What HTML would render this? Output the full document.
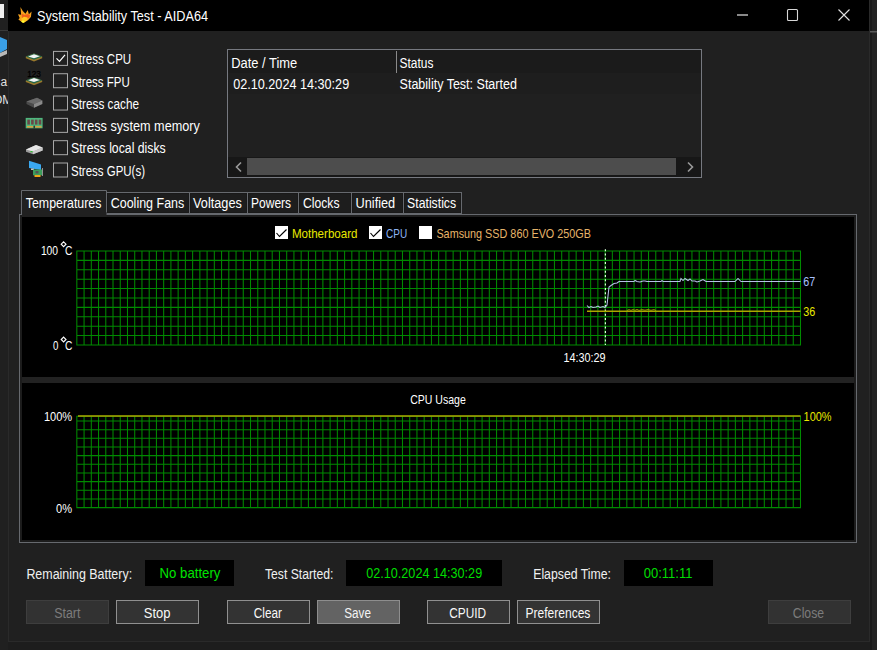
<!DOCTYPE html>
<html><head><meta charset="utf-8"><style>
html,body{margin:0;padding:0;background:#1c1c1c;width:877px;height:650px;overflow:hidden}
svg{display:block;font-family:"Liberation Sans", sans-serif}
</style></head><body>
<svg width="877" height="650" viewBox="0 0 877 650">
<rect x="0" y="0" width="877" height="650" fill="#1d1d1d" />
<rect x="872" y="0" width="5" height="650" fill="#232323" />
<rect x="870" y="0" width="2" height="650" fill="#1a1a1a" />
<rect x="869" y="31" width="8" height="1.5" fill="#5a5a5a" />
<rect x="0" y="0" width="8" height="650" fill="#202020" />
<rect x="0" y="4" width="4" height="14" fill="#f0f0f0"/>
<rect x="0" y="30" width="8" height="1" fill="#3a3a3a"/>
<path d="M0 37 L7 40 L7 49 L0 53 Z" fill="#3aa0e8"/>
<path d="M0 53 L7 50 L7 54 L0 57 Z" fill="#b8b8b8"/>
<text x="-9.5" y="86" font-size="12" fill="#e0e0e0">Ma</text>
<text x="-7" y="104" font-size="12" fill="#e0e0e0">OM</text>
<rect x="8" y="0" width="862" height="642" fill="#2a2a2a" />
<rect x="9" y="31" width="860" height="610" fill="#202020" />
<rect x="8" y="0" width="861" height="31" fill="#000000" />
<text x="37.00" y="20.50" font-size="13.8" fill="#ffffff" textLength="171.00" lengthAdjust="spacingAndGlyphs" >System Stability Test - AIDA64</text>
<line x1="737" y1="15" x2="748" y2="15" stroke="#c4c4c4" stroke-width="1.4"/>
<rect x="787.5" y="9.5" width="10" height="11" rx="1" fill="none" stroke="#d8d8d8" stroke-width="1.1"/>
<path d="M838.5 9.5 L849.5 20.5 M849.5 9.5 L838.5 20.5" stroke="#e0e0e0" stroke-width="1.1"/>
<path d="M20.4 6.9 L22.8 11.1 L25.5 13.8 L27.7 10.1 L28.9 14.2 L31.6 11.6 L30.9 16.9 L27.9 20.2 L23.5 23 L21.8 21.9 L18.4 19.6 L19.7 17.9 L18 14.2 L21.1 14.8 L20.8 10.8 Z" fill="#f5a21e"/>
<path d="M21.5 13.5 L24.5 15 L27.5 14 L30 15 L29.5 17.5 L26 19 L22 18 Z" fill="#f0601a"/>
<path d="M21.3 18.5 L24 16.8 L27.5 17.5 L27.5 19.8 L24 22.5 L22 21.8 Z" fill="#ffc820"/>
<ellipse cx="23" cy="21.6" rx="1.6" ry="1.1" fill="#ffff30"/>
<rect x="53.5" y="51.400000000000006" width="14" height="14" fill="#202020" stroke="#a8a8a8" stroke-width="1"/>
<path d="M56.5 58.400000000000006 L59.5 61.400000000000006 L65 54.900000000000006" fill="none" stroke="#ffffff" stroke-width="1.2"/>
<text x="71.00" y="64.20" font-size="13.8" fill="#ffffff" textLength="60.20" lengthAdjust="spacingAndGlyphs" >Stress CPU</text>
<rect x="53.5" y="73.72000000000001" width="14" height="14" fill="#202020" stroke="#a8a8a8" stroke-width="1"/>
<text x="71.00" y="86.52" font-size="13.8" fill="#ffffff" textLength="58.80" lengthAdjust="spacingAndGlyphs" >Stress FPU</text>
<rect x="53.5" y="96.04" width="14" height="14" fill="#202020" stroke="#a8a8a8" stroke-width="1"/>
<text x="71.00" y="108.84" font-size="13.8" fill="#ffffff" textLength="68.00" lengthAdjust="spacingAndGlyphs" >Stress cache</text>
<rect x="53.5" y="118.36000000000003" width="14" height="14" fill="#202020" stroke="#a8a8a8" stroke-width="1"/>
<text x="71.00" y="131.16" font-size="13.8" fill="#ffffff" textLength="128.90" lengthAdjust="spacingAndGlyphs" >Stress system memory</text>
<rect x="53.5" y="140.68" width="14" height="14" fill="#202020" stroke="#a8a8a8" stroke-width="1"/>
<text x="71.00" y="153.48" font-size="13.8" fill="#ffffff" textLength="94.70" lengthAdjust="spacingAndGlyphs" >Stress local disks</text>
<rect x="53.5" y="163.0" width="14" height="14" fill="#202020" stroke="#a8a8a8" stroke-width="1"/>
<text x="71.00" y="175.80" font-size="13.8" fill="#ffffff" textLength="74.00" lengthAdjust="spacingAndGlyphs" >Stress GPU(s)</text>
<path d="M25.8 56.6 L34 53.4 L42.2 56.6 L42.2 58.199999999999996 L34 61.4 L25.8 58.199999999999996 Z" fill="#98782c"/>
<path d="M25.8 56.5 L34 53.4 L42.2 56.5 L34 59.8 Z" fill="#236848"/>
<path d="M28.1 56.449999999999996 L34 54.15 L39.9 56.3 L34 58.3 Z" fill="#f4f4f4"/>
<path d="M25.8 80.4 L34 77.2 L42.2 80.4 L42.2 82.0 L34 85.2 L25.8 82.0 Z" fill="#98782c"/>
<path d="M25.8 80.3 L34 77.2 L42.2 80.3 L34 83.60000000000001 Z" fill="#236848"/>
<path d="M28.1 80.25 L34 77.95 L39.9 80.10000000000001 L34 82.10000000000001 Z" fill="#f4f4f4"/>
<text x="27.2" y="76.8" font-size="8.4" fill="#000000" stroke="#000" stroke-width="0.3" textLength="13.6" lengthAdjust="spacingAndGlyphs">123</text>
<path d="M26.5 101.5 L37 97.8 L42.3 100.5 L42.3 104 L34 107.7 L26.5 104 Z" fill="#4a4a4a"/>
<path d="M26.5 101.5 L37 97.8 L42.3 100.5 L34 104 Z" fill="#6a6a6a"/>
<path d="M34 104 L42.3 100.5 L42.3 104 L34 107.7 Z" fill="#8a8a8a"/>
<rect x="25.7" y="117.9" width="16.9" height="10.4" fill="#4fb87e"/>
<rect x="27.3" y="119.6" width="2.6" height="5" fill="#6a4848"/>
<rect x="31.1" y="119.6" width="2.6" height="5" fill="#6a4848"/>
<rect x="34.9" y="119.6" width="2.6" height="5" fill="#6a4848"/>
<rect x="38.7" y="119.6" width="2.6" height="5" fill="#6a4848"/>
<rect x="27" y="126" width="6.3" height="1.6" fill="#d8a040"/>
<rect x="35.2" y="126" width="6.3" height="1.6" fill="#d8a040"/>
<rect x="33.6" y="125.6" width="1.2" height="2.7" fill="#202020"/>
<path d="M26 149.5 L36 145 L42.6 147.5 L42.6 150.5 L33 154.2 L26 151.8 Z" fill="#9a9a9a"/>
<path d="M26 149.5 L36 145 L42.6 147.5 L33 151.6 Z" fill="#e6e6e6"/>
<path d="M33 151.6 L42.6 147.5 L42.6 150.5 L33 154.2 Z" fill="#c8c8c8"/>
<rect x="30.5" y="151" width="2" height="1.2" fill="#30c030"/>
<path d="M29 160.7 L41 164.5 L41 170 L29 168 Z" fill="#3aa8f0"/>
<rect x="31" y="168.5" width="3" height="1.5" fill="#c8c8c8"/>
<rect x="33" y="169.5" width="9" height="5.8" fill="#3d9e5c"/>
<rect x="35.5" y="171" width="3" height="2.5" fill="#555"/>
<rect x="34.5" y="175" width="6" height="2" fill="#f0a818"/>
<rect x="42" y="168" width="0.8" height="8" fill="#b0b0b0"/>
<rect x="227" y="49" width="475" height="129" fill="#767980" />
<rect x="228" y="50" width="473" height="127" fill="#202020" />
<rect x="228" y="50" width="473" height="23" fill="#1b1b1b" />
<rect x="228" y="73" width="473" height="21" fill="#1e1e1e" />
<rect x="396" y="51" width="1" height="22" fill="#8a8a8a"/>
<text x="231.20" y="67.60" font-size="13.8" fill="#fff" textLength="66.00" lengthAdjust="spacingAndGlyphs" >Date / Time</text>
<text x="399.60" y="68.00" font-size="13.8" fill="#fff" textLength="33.80" lengthAdjust="spacingAndGlyphs" >Status</text>
<text x="233.20" y="89.00" font-size="13.8" fill="#fff" textLength="116.00" lengthAdjust="spacingAndGlyphs" >02.10.2024 14:30:29</text>
<text x="399.60" y="88.70" font-size="13.8" fill="#fff" textLength="117.30" lengthAdjust="spacingAndGlyphs" >Stability Test: Started</text>
<rect x="228" y="157" width="473" height="20" fill="#171717" />
<rect x="247" y="158" width="429" height="17" fill="#4d4d4d" />
<path d="M241 162.5 L236.5 167 L241 171.5" fill="none" stroke="#9a9a9a" stroke-width="1.6"/>
<path d="M688 162.5 L692.5 167 L688 171.5" fill="none" stroke="#9a9a9a" stroke-width="1.6"/>
<rect x="19" y="214" width="838" height="329" fill="#66696e" />
<rect x="20" y="215" width="836" height="327" fill="#1c1c1c" />
<rect x="22" y="217" width="832" height="323" fill="#000000" />
<rect x="22" y="377" width="832" height="6" fill="#222222" />
<rect x="106.5" y="192.5" width="83" height="21" fill="#1b1b1b" stroke="#66696e" stroke-width="1"/>
<rect x="107.5" y="193.5" width="81" height="19" fill="#1d1d1d" stroke="#191919" stroke-width="1"/>
<text x="110.70" y="208.10" font-size="13.8" fill="#fff" textLength="73.60" lengthAdjust="spacingAndGlyphs" >Cooling Fans</text>
<rect x="189.5" y="192.5" width="58" height="21" fill="#1b1b1b" stroke="#66696e" stroke-width="1"/>
<rect x="190.5" y="193.5" width="56" height="19" fill="#1d1d1d" stroke="#191919" stroke-width="1"/>
<text x="193.10" y="208.10" font-size="13.8" fill="#fff" textLength="48.70" lengthAdjust="spacingAndGlyphs" >Voltages</text>
<rect x="247.5" y="192.5" width="51" height="21" fill="#1b1b1b" stroke="#66696e" stroke-width="1"/>
<rect x="248.5" y="193.5" width="49" height="19" fill="#1d1d1d" stroke="#191919" stroke-width="1"/>
<text x="251.00" y="208.10" font-size="13.8" fill="#fff" textLength="40.10" lengthAdjust="spacingAndGlyphs" >Powers</text>
<rect x="298.5" y="192.5" width="53" height="21" fill="#1b1b1b" stroke="#66696e" stroke-width="1"/>
<rect x="299.5" y="193.5" width="51" height="19" fill="#1d1d1d" stroke="#191919" stroke-width="1"/>
<text x="303.00" y="208.10" font-size="13.8" fill="#fff" textLength="36.50" lengthAdjust="spacingAndGlyphs" >Clocks</text>
<rect x="351.5" y="192.5" width="52" height="21" fill="#1b1b1b" stroke="#66696e" stroke-width="1"/>
<rect x="352.5" y="193.5" width="50" height="19" fill="#1d1d1d" stroke="#191919" stroke-width="1"/>
<text x="355.50" y="208.10" font-size="13.8" fill="#fff" textLength="39.70" lengthAdjust="spacingAndGlyphs" >Unified</text>
<rect x="403.5" y="192.5" width="58" height="21" fill="#1b1b1b" stroke="#66696e" stroke-width="1"/>
<rect x="404.5" y="193.5" width="56" height="19" fill="#1d1d1d" stroke="#191919" stroke-width="1"/>
<text x="407.10" y="208.10" font-size="13.8" fill="#fff" textLength="49.00" lengthAdjust="spacingAndGlyphs" >Statistics</text>
<path d="M21.5 214 L21.5 190.5 L106.5 190.5 L106.5 214" fill="#202020" stroke="#66696e" stroke-width="1"/>
<rect x="22" y="212" width="84.5" height="5" fill="#202020" />
<rect x="20" y="214" width="1" height="1" fill="#66696e" />
<text x="25.80" y="208.00" font-size="13.8" fill="#fff" textLength="75.60" lengthAdjust="spacingAndGlyphs" >Temperatures</text>
<path d="M76.83 251.00V344.95 M84.07 251.00V344.95 M91.30 251.00V344.95 M98.54 251.00V344.95 M105.78 251.00V344.95 M113.01 251.00V344.95 M120.25 251.00V344.95 M127.49 251.00V344.95 M134.72 251.00V344.95 M141.96 251.00V344.95 M149.20 251.00V344.95 M156.43 251.00V344.95 M163.67 251.00V344.95 M170.91 251.00V344.95 M178.14 251.00V344.95 M185.38 251.00V344.95 M192.62 251.00V344.95 M199.85 251.00V344.95 M207.09 251.00V344.95 M214.33 251.00V344.95 M221.56 251.00V344.95 M228.80 251.00V344.95 M236.04 251.00V344.95 M243.27 251.00V344.95 M250.51 251.00V344.95 M257.75 251.00V344.95 M264.98 251.00V344.95 M272.22 251.00V344.95 M279.46 251.00V344.95 M286.69 251.00V344.95 M293.93 251.00V344.95 M301.17 251.00V344.95 M308.40 251.00V344.95 M315.64 251.00V344.95 M322.88 251.00V344.95 M330.11 251.00V344.95 M337.35 251.00V344.95 M344.59 251.00V344.95 M351.82 251.00V344.95 M359.06 251.00V344.95 M366.30 251.00V344.95 M373.53 251.00V344.95 M380.77 251.00V344.95 M388.01 251.00V344.95 M395.24 251.00V344.95 M402.48 251.00V344.95 M409.72 251.00V344.95 M416.95 251.00V344.95 M424.19 251.00V344.95 M431.43 251.00V344.95 M438.66 251.00V344.95 M445.90 251.00V344.95 M453.14 251.00V344.95 M460.38 251.00V344.95 M467.61 251.00V344.95 M474.85 251.00V344.95 M482.09 251.00V344.95 M489.32 251.00V344.95 M496.56 251.00V344.95 M503.80 251.00V344.95 M511.03 251.00V344.95 M518.27 251.00V344.95 M525.51 251.00V344.95 M532.74 251.00V344.95 M539.98 251.00V344.95 M547.22 251.00V344.95 M554.45 251.00V344.95 M561.69 251.00V344.95 M568.93 251.00V344.95 M576.16 251.00V344.95 M583.40 251.00V344.95 M590.64 251.00V344.95 M597.87 251.00V344.95 M605.11 251.00V344.95 M612.35 251.00V344.95 M619.58 251.00V344.95 M626.82 251.00V344.95 M634.06 251.00V344.95 M641.29 251.00V344.95 M648.53 251.00V344.95 M655.77 251.00V344.95 M663.00 251.00V344.95 M670.24 251.00V344.95 M677.48 251.00V344.95 M684.71 251.00V344.95 M691.95 251.00V344.95 M699.19 251.00V344.95 M706.42 251.00V344.95 M713.66 251.00V344.95 M720.90 251.00V344.95 M728.13 251.00V344.95 M735.37 251.00V344.95 M742.61 251.00V344.95 M749.84 251.00V344.95 M757.08 251.00V344.95 M764.32 251.00V344.95 M771.55 251.00V344.95 M778.79 251.00V344.95 M786.03 251.00V344.95 M793.26 251.00V344.95 M800.50 251.00V344.95 M76.33 251.00H801.00 M76.33 260.39H801.00 M76.33 269.79H801.00 M76.33 279.19H801.00 M76.33 288.58H801.00 M76.33 297.98H801.00 M76.33 307.37H801.00 M76.33 316.76H801.00 M76.33 326.16H801.00 M76.33 335.56H801.00 M76.33 344.95H801.00" stroke="#008a00" stroke-width="1.05" fill="none"/>
<path d="M76.83 416.20V507.60 M84.07 416.20V507.60 M91.30 416.20V507.60 M98.54 416.20V507.60 M105.78 416.20V507.60 M113.01 416.20V507.60 M120.25 416.20V507.60 M127.49 416.20V507.60 M134.72 416.20V507.60 M141.96 416.20V507.60 M149.20 416.20V507.60 M156.43 416.20V507.60 M163.67 416.20V507.60 M170.91 416.20V507.60 M178.14 416.20V507.60 M185.38 416.20V507.60 M192.62 416.20V507.60 M199.85 416.20V507.60 M207.09 416.20V507.60 M214.33 416.20V507.60 M221.56 416.20V507.60 M228.80 416.20V507.60 M236.04 416.20V507.60 M243.27 416.20V507.60 M250.51 416.20V507.60 M257.75 416.20V507.60 M264.98 416.20V507.60 M272.22 416.20V507.60 M279.46 416.20V507.60 M286.69 416.20V507.60 M293.93 416.20V507.60 M301.17 416.20V507.60 M308.40 416.20V507.60 M315.64 416.20V507.60 M322.88 416.20V507.60 M330.11 416.20V507.60 M337.35 416.20V507.60 M344.59 416.20V507.60 M351.82 416.20V507.60 M359.06 416.20V507.60 M366.30 416.20V507.60 M373.53 416.20V507.60 M380.77 416.20V507.60 M388.01 416.20V507.60 M395.24 416.20V507.60 M402.48 416.20V507.60 M409.72 416.20V507.60 M416.95 416.20V507.60 M424.19 416.20V507.60 M431.43 416.20V507.60 M438.66 416.20V507.60 M445.90 416.20V507.60 M453.14 416.20V507.60 M460.38 416.20V507.60 M467.61 416.20V507.60 M474.85 416.20V507.60 M482.09 416.20V507.60 M489.32 416.20V507.60 M496.56 416.20V507.60 M503.80 416.20V507.60 M511.03 416.20V507.60 M518.27 416.20V507.60 M525.51 416.20V507.60 M532.74 416.20V507.60 M539.98 416.20V507.60 M547.22 416.20V507.60 M554.45 416.20V507.60 M561.69 416.20V507.60 M568.93 416.20V507.60 M576.16 416.20V507.60 M583.40 416.20V507.60 M590.64 416.20V507.60 M597.87 416.20V507.60 M605.11 416.20V507.60 M612.35 416.20V507.60 M619.58 416.20V507.60 M626.82 416.20V507.60 M634.06 416.20V507.60 M641.29 416.20V507.60 M648.53 416.20V507.60 M655.77 416.20V507.60 M663.00 416.20V507.60 M670.24 416.20V507.60 M677.48 416.20V507.60 M684.71 416.20V507.60 M691.95 416.20V507.60 M699.19 416.20V507.60 M706.42 416.20V507.60 M713.66 416.20V507.60 M720.90 416.20V507.60 M728.13 416.20V507.60 M735.37 416.20V507.60 M742.61 416.20V507.60 M749.84 416.20V507.60 M757.08 416.20V507.60 M764.32 416.20V507.60 M771.55 416.20V507.60 M778.79 416.20V507.60 M786.03 416.20V507.60 M793.26 416.20V507.60 M800.50 416.20V507.60 M76.33 416.20H801.00 M76.33 421.00H801.00 M76.33 429.66H801.00 M76.33 438.32H801.00 M76.33 446.98H801.00 M76.33 455.64H801.00 M76.33 464.30H801.00 M76.33 472.96H801.00 M76.33 481.62H801.00 M76.33 490.28H801.00 M76.33 498.94H801.00 M76.33 507.60H801.00" stroke="#008a00" stroke-width="1.05" fill="none"/>
<rect x="275" y="226" width="13" height="13" fill="#ffffff"/>
<path d="M276.5 233 L279.5 236.5 L286.5 229.5" fill="none" stroke="#000" stroke-width="1.15"/>
<text x="291.90" y="237.80" font-size="12.4" fill="#e8e800" textLength="65.60" lengthAdjust="spacingAndGlyphs" >Motherboard</text>
<rect x="369" y="226" width="13" height="13" fill="#ffffff"/>
<path d="M370.5 233 L373.5 236.5 L380.5 229.5" fill="none" stroke="#000" stroke-width="1.15"/>
<text x="386.00" y="237.80" font-size="12.4" fill="#8cb4f4" textLength="21.10" lengthAdjust="spacingAndGlyphs" >CPU</text>
<rect x="419" y="226" width="13" height="13" fill="#ffffff"/>
<text x="436.40" y="237.80" font-size="12.4" fill="#e6b46a" textLength="154.60" lengthAdjust="spacingAndGlyphs" >Samsung SSD 860 EVO 250GB</text>
<text x="40.90" y="254.90" font-size="12.4" fill="#fff" textLength="17.20" lengthAdjust="spacingAndGlyphs" >100</text>
<path d="M63.6 241.8 L66 244.2 L63.6 246.6 L61.2 244.2 Z" fill="none" stroke="#ffffff" stroke-width="1.15"/>
<text x="64.90" y="254.90" font-size="12.4" fill="#fff" textLength="7.40" lengthAdjust="spacingAndGlyphs" >C</text>
<text x="52.90" y="350.00" font-size="12.4" fill="#fff" textLength="5.40" lengthAdjust="spacingAndGlyphs" >0</text>
<path d="M63.6 337.1 L66 339.5 L63.6 341.9 L61.2 339.5 Z" fill="none" stroke="#ffffff" stroke-width="1.15"/>
<text x="64.90" y="350.00" font-size="12.4" fill="#fff" textLength="7.40" lengthAdjust="spacingAndGlyphs" >C</text>
<text x="563.40" y="361.70" font-size="12.4" fill="#fff" textLength="42.20" lengthAdjust="spacingAndGlyphs" >14:30:29</text>
<text x="803.30" y="286.00" font-size="12.4" fill="#a8c0ff" textLength="12.00" lengthAdjust="spacingAndGlyphs" >67</text>
<text x="803.30" y="315.50" font-size="12.4" fill="#e8e800" textLength="12.00" lengthAdjust="spacingAndGlyphs" >36</text>
<line x1="605.4" y1="249.2" x2="605.4" y2="345" stroke="#d8ffd8" stroke-width="1.2" stroke-dasharray="2 2.3"/>
<path d="M587 311.2 H800.5" stroke="#aca600" stroke-width="1.6" fill="none"/>
<path d="M627 310.5 L629 309.6 L631 310.4 L633 309.5 L635 310.3 L637 309.4 L639 310.4 L642 309.6 L645 310.2 L648 309.5 L651 310.3 L654 309.6 L656 310.5" stroke="#a4a000" stroke-width="0.9" fill="none"/>
<path d="M587 305.5 L589 307.5 L591 306.5 L593 307.5 L596 307 L598 306 L600 307.5 L603 306.5 L605 307.5 L607 305 L608 296 L609 287 L611 285.5 L614 283.5 L617 283 L619 281.5 L634 281.5 L635 280.5 L637 281.5 L640 282 L643 281 L645 281 L647 281.5 L661 281.5 L662 280.5 L663 281.5 L680 281.5 L681 278.5 L683 280.5 L685 278.5 L688 280.5 L690 279 L692 281 L695 281 L697 282 L700 281 L703 279.5 L706 281.5 L735 281.5 L738 278.5 L741 281.5 L800.5 281.5" stroke="#b4c0e8" stroke-width="1.05" fill="none"/>
<text x="410.20" y="404.00" font-size="12.4" fill="#fff" textLength="55.60" lengthAdjust="spacingAndGlyphs" >CPU Usage</text>
<text x="43.90" y="420.50" font-size="12.4" fill="#fff" textLength="28.30" lengthAdjust="spacingAndGlyphs" >100%</text>
<text x="56.10" y="512.60" font-size="12.4" fill="#fff" textLength="16.00" lengthAdjust="spacingAndGlyphs" >0%</text>
<text x="803.60" y="421.00" font-size="12.4" fill="#e8e800" textLength="28.00" lengthAdjust="spacingAndGlyphs" >100%</text>
<path d="M78 416 H800.5" stroke="#aca600" stroke-width="1.6" fill="none"/>
<text x="26.40" y="578.50" font-size="13.8" fill="#f0f0f0" textLength="105.70" lengthAdjust="spacingAndGlyphs" >Remaining Battery:</text>
<rect x="145" y="560" width="89" height="26" fill="#000" />
<text x="159.60" y="578.40" font-size="13.8" fill="#00e400" textLength="60.80" lengthAdjust="spacingAndGlyphs" >No battery</text>
<text x="265.00" y="578.50" font-size="13.8" fill="#f0f0f0" textLength="68.40" lengthAdjust="spacingAndGlyphs" >Test Started:</text>
<rect x="346" y="560" width="156" height="26" fill="#000" />
<text x="366.20" y="578.40" font-size="13.8" fill="#00dc00" textLength="116.00" lengthAdjust="spacingAndGlyphs" >02.10.2024 14:30:29</text>
<text x="533.20" y="578.50" font-size="13.8" fill="#f0f0f0" textLength="77.80" lengthAdjust="spacingAndGlyphs" >Elapsed Time:</text>
<rect x="624" y="560" width="89" height="26" fill="#000" />
<text x="643.80" y="578.40" font-size="13.8" fill="#00dc00" textLength="48.60" lengthAdjust="spacingAndGlyphs" >00:11:11</text>
<rect x="26.5" y="600.5" width="82" height="23" fill="#323232" stroke="#3e3e3e" stroke-width="1"/>
<text x="54.20" y="617.50" font-size="13.8" fill="#7c7c7c" textLength="26.20" lengthAdjust="spacingAndGlyphs" >Start</text>
<rect x="116.5" y="600.5" width="82" height="23" fill="#333333" stroke="#909090" stroke-width="1"/>
<text x="143.80" y="617.50" font-size="13.8" fill="#f8f8f8" textLength="26.70" lengthAdjust="spacingAndGlyphs" >Stop</text>
<rect x="227.5" y="600.5" width="82" height="23" fill="#333333" stroke="#909090" stroke-width="1"/>
<text x="253.80" y="617.50" font-size="13.8" fill="#f8f8f8" textLength="28.20" lengthAdjust="spacingAndGlyphs" >Clear</text>
<rect x="317.5" y="600.5" width="82" height="23" fill="#636363" stroke="#8e8e8e" stroke-width="1"/>
<text x="344.30" y="617.50" font-size="13.8" fill="#f4f4f4" textLength="26.70" lengthAdjust="spacingAndGlyphs" >Save</text>
<rect x="427.5" y="600.5" width="82" height="23" fill="#333333" stroke="#909090" stroke-width="1"/>
<text x="449.20" y="617.50" font-size="13.8" fill="#f8f8f8" textLength="36.90" lengthAdjust="spacingAndGlyphs" >CPUID</text>
<rect x="517.5" y="600.5" width="82" height="23" fill="#333333" stroke="#909090" stroke-width="1"/>
<text x="525.40" y="617.50" font-size="13.8" fill="#f8f8f8" textLength="65.00" lengthAdjust="spacingAndGlyphs" >Preferences</text>
<rect x="768.5" y="600.5" width="82" height="23" fill="#323232" stroke="#3e3e3e" stroke-width="1"/>
<text x="792.80" y="617.50" font-size="13.8" fill="#7c7c7c" textLength="31.30" lengthAdjust="spacingAndGlyphs" >Close</text>
</svg></body></html>
